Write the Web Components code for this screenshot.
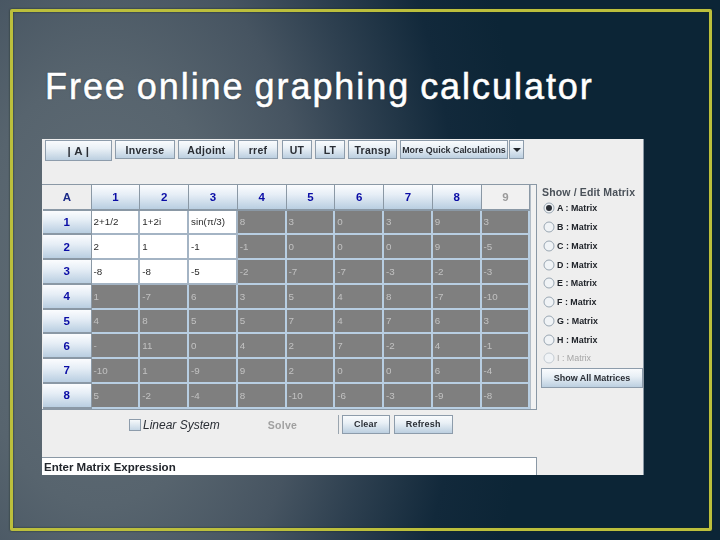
<!DOCTYPE html>
<html>
<head>
<meta charset="utf-8">
<title>Free online graphing calculator</title>
<style>
  html, body { margin: 0; height: 540px; overflow: hidden; }
  body { font-family: "Liberation Sans", Arial, sans-serif; }
</style>
</head>
<body>
<slide-frame>
  <span slot="title">Free online graphing calculator</span>
  <matrix-panel></matrix-panel>
</slide-frame>

<script>
class SlideFrame extends HTMLElement {
  connectedCallback() {
    this.attachShadow({ mode: 'open' });
    this.shadowRoot.innerHTML = `
      <style>
        :host {
          display: block;
          width: 720px;
          height: 540px;
          box-sizing: border-box;
          padding: 9px 8px 9px 10px;
          background: radial-gradient(ellipse 430px 720px at 100px 290px, #626e77 0%, #57646e 30%, #465461 50%, #2e4050 65%, #12293b 84%, #0c2536 100%);
        }
        .frame {
          height: 100%;
          box-sizing: border-box;
          border: 3px solid #bcbf3c;
          border-radius: 2px;
          padding: 55px 0 0 29px;
          box-shadow: 0 0 2px #1c2a20, inset 0 0 2px #1c2a20;
        }
        h1 {
          margin: 0 0 32px 3px;
          font: 400 36px/40px "Liberation Sans", Arial, sans-serif;
          letter-spacing: 1.95px;
          word-spacing: -2px;
          color: #fff;
          white-space: nowrap;
          -webkit-text-stroke: .5px #fff;
          text-shadow: 0 0 2px #26333c;
        }
      </style>
      <div class="frame">
        <h1><slot name="title"></slot></h1>
        <slot></slot>
      </div>
    `;
  }
}
customElements.define('slide-frame', SlideFrame);

class CalcButton extends HTMLElement {
  connectedCallback() {
    this.attachShadow({ mode: 'open' });
    this.shadowRoot.innerHTML = `
      <style>
        :host {
          display: flex;
          align-items: center;
          justify-content: center;
          box-sizing: border-box;
          width: var(--w, 60px);
          height: var(--h, 19px);
          border: 1px solid #8d9cab;
          background: linear-gradient(#f9fbfd 0%, #e9f0f6 40%, #bccfe0 100%);
          color: #2a2e35;
          font: 700 var(--fs, 10.5px) "Liberation Sans", Arial, sans-serif;
          letter-spacing: var(--ls, .3px);
          white-space: nowrap;
        }
      </style>
      <slot></slot>
    `;
  }
}
customElements.define('calc-button', CalcButton);

class MatrixGrid extends HTMLElement {
  connectedCallback() {
    const rows = [
      ['2+1/2', '1+2i', 'sin(π/3)', '8', '3', '0', '3', '9', '3'],
      ['2', '1', '-1', '-1', '0', '0', '0', '9', '-5'],
      ['-8', '-8', '-5', '-2', '-7', '-7', '-3', '-2', '-3'],
      ['1', '-7', '6', '3', '5', '4', '8', '-7', '-10'],
      ['4', '8', '5', '5', '7', '4', '7', '6', '3'],
      ['-', '11', '0', '4', '2', '7', '-2', '4', '-1'],
      ['-10', '1', '-9', '9', '2', '0', '0', '6', '-4'],
      ['5', '-2', '-4', '8', '-10', '-6', '-3', '-9', '-8']
    ];
    let cells = '<div class="corner head">A</div>';
    for (let c = 1; c <= 9; c++) {
      cells += `<div class="head ${c === 9 ? 'off' : 'on'}">${c}</div>`;
    }
    rows.forEach((row, r) => {
      cells += `<div class="head on">${r + 1}</div>`;
      row.forEach((v, c) => {
        const live = r < 3 && c < 3;
        cells += `<div class="cell ${live ? 'live' : ''}">${v}</div>`;
      });
    });
    this.attachShadow({ mode: 'open' });
    this.shadowRoot.innerHTML = `
      <style>
        :host {
          display: flex;
          border-top: 1px solid #8a98a5;
          border-bottom: 1px solid #8a98a5;
          border-right: 1px solid #8a98a5;
          padding-left: 1px;
          background: #eee;
        }
        .grid {
          display: grid;
          grid-template-columns: 48.6px repeat(9, 48.75px);
          grid-template-rows: 25.5px repeat(8, 24.75px);
          flex: none;
        }
        .head {
          display: flex;
          align-items: center;
          justify-content: center;
          font: 700 11.5px "Liberation Sans", Arial, sans-serif;
          box-sizing: border-box;
          border-bottom: 2px solid #8a98a5;
          border-right: 1px solid #8a98a5;
        }
        .on {
          color: #0a0ca5;
          background: linear-gradient(#fbfcfe 0%, #e6eef6 40%, #b9cee1 100%);
        }
        .corner { color: #1b2a88; background: #eee; }
        .off { color: #9a9a9a; background: #f1f1f1; }
        .cell {
          display: flex;
          align-items: center;
          box-sizing: border-box;
          padding-left: 2px;
          font: 400 9.8px "Liberation Sans", Arial, sans-serif;
          color: #c2c2c2;
          background: #7f7f7f;
          border-right: 2px solid #b8cee2;
          border-bottom: 2px solid #b8cee2;
        }
        .live { color: #2a2a2a; background: #fff; border-color: #a4b4c4; }
        .bar { flex: 1; border-left: 1px solid #b4bec8; background: #f2f2f2; }
      </style>
      <div class="grid">${cells}</div>
      <div class="bar"></div>
    `;
  }
}
customElements.define('matrix-grid', MatrixGrid);

class MatrixRadio extends HTMLElement {
  connectedCallback() {
    const on = this.hasAttribute('checked');
    const off = this.hasAttribute('disabled');
    this.attachShadow({ mode: 'open' });
    this.shadowRoot.innerHTML = `
      <style>
        :host {
          display: flex;
          align-items: center;
          gap: 2px;
          height: 18.75px;
          flex: none;
          color: #20242a;
          font: 700 8.9px "Liberation Sans", Arial, sans-serif;
          white-space: nowrap;
        }
        :host([disabled]) { color: #a6a6a6; font-weight: 400; }
        svg { width: 12px; height: 12px; flex: none; }
      </style>
      <svg viewBox="0 0 12 12">
        <circle cx="6" cy="6" r="5" fill="#f0f3f6" stroke="${off ? '#c4ccd3' : '#9aa7b3'}"/>
        ${on ? '<circle cx="6" cy="6" r="3" fill="#2b2f36"/>' : ''}
      </svg>
      <slot></slot>
    `;
  }
}
customElements.define('matrix-radio', MatrixRadio);

class MatrixPanel extends HTMLElement {
  connectedCallback() {
    const names = 'ABCDEFGHI'.split('');
    const radios = names.map((n, i) =>
      `<matrix-radio ${i === 0 ? 'checked' : ''} ${n === 'I' ? 'disabled' : ''}>${n} : Matrix</matrix-radio>`
    ).join('');
    this.attachShadow({ mode: 'open' });
    this.shadowRoot.innerHTML = `
      <style>
        :host {
          display: grid;
          grid-template-columns: 495px 107px;
          width: 602px;
          height: 336px;
          background: #eeeeee;
          overflow: hidden;
          filter: blur(.3px);
        }
        .left { display: flex; flex-direction: column; }
        .tools {
          display: flex;
          align-items: flex-start;
          gap: 3px;
          height: 45px;
          padding: 1px 0 0 3px;
          box-sizing: border-box;
        }
        .ut { margin-left: 1px; }
        .combo { display: flex; gap: 1px; }
        .arrow { width: 0; height: 0; border: 4px solid transparent; border-top: 4px solid #22262c; border-bottom: 0; }
        .actions {
          display: flex;
          align-items: flex-start;
          height: 47.5px;
          box-sizing: border-box;
          padding-top: 5px;
          color: #2a2e35;
        }
        .check {
          display: flex;
          align-items: center;
          gap: 2px;
          margin: 3px 0 0 87px;
          font: italic 400 12px "Liberation Sans", Arial, sans-serif;
        }
        .box {
          width: 10px;
          height: 10px;
          border: 1px solid #8d9cab;
          background: linear-gradient(#f6f9fb, #c5d6e5);
        }
        .solve {
          width: 70px;
          margin: 4px 0 0 48px;
          font: 700 10.5px "Liberation Sans", Arial, sans-serif;
          letter-spacing: .3px;
          color: #a0a0a0;
        }
        .sep { width: 1px; height: 19px; background: #9aa5af; margin: 0 3px 0 0; }
        .clear { margin-right: 4px; }
        .expr {
          flex: 1;
          background: #fff;
          border-top: 1px solid #8a98a5;
          border-right: 1px solid #8a98a5;
          display: flex;
          align-items: center;
          padding-left: 2px;
          font: 700 11.5px "Liberation Sans", Arial, sans-serif;
          color: #22262c;
        }
        .right {
          display: flex;
          flex-direction: column;
          padding-left: 4px;
          border-right: 1px solid #8a98a5;
          box-sizing: border-box;
        }
        .legend {
          margin: 47px 0 0 1px;
          height: 13px;
          font: 700 10.5px/13px "Liberation Sans", Arial, sans-serif;
          letter-spacing: .15px;
          color: #4a5159;
          white-space: nowrap;
        }
        .radios {
          display: flex;
          flex-direction: column;
          height: 169px;
          padding: 0 0 0 2px;
          flex: none;
        }
      </style>
      <div class="left">
        <div class="tools">
          <calc-button style="--w:67px;--h:21px;--fs:11.5px">| A |</calc-button>
          <calc-button style="--w:60px">Inverse</calc-button>
          <calc-button style="--w:57px">Adjoint</calc-button>
          <calc-button style="--w:40px">rref</calc-button>
          <calc-button class="ut" style="--w:30px">UT</calc-button>
          <calc-button style="--w:30px">LT</calc-button>
          <calc-button style="--w:49px">Transp</calc-button>
          <div class="combo">
            <calc-button style="--w:108px;--fs:8.9px;--ls:0">More Quick Calculations</calc-button>
            <calc-button style="--w:15px"><span class="arrow"></span></calc-button>
          </div>
        </div>
        <matrix-grid></matrix-grid>
        <div class="actions">
          <div class="check"><span class="box"></span>Linear System</div>
          <div class="solve">Solve</div>
          <div class="sep"></div>
          <calc-button class="clear" style="--w:48px;--fs:9px;--ls:.2px">Clear</calc-button>
          <calc-button style="--w:59px;--fs:9px;--ls:.2px">Refresh</calc-button>
        </div>
        <div class="expr">Enter Matrix Expression</div>
      </div>
      <div class="right">
        <div class="legend">Show / Edit Matrix</div>
        <div class="radios">${radios}</div>
        <calc-button style="--w:102px;--h:20px;--fs:9px;--ls:0">Show All Matrices</calc-button>
      </div>
    `;
  }
}
customElements.define('matrix-panel', MatrixPanel);
</script>
</body>
</html>
